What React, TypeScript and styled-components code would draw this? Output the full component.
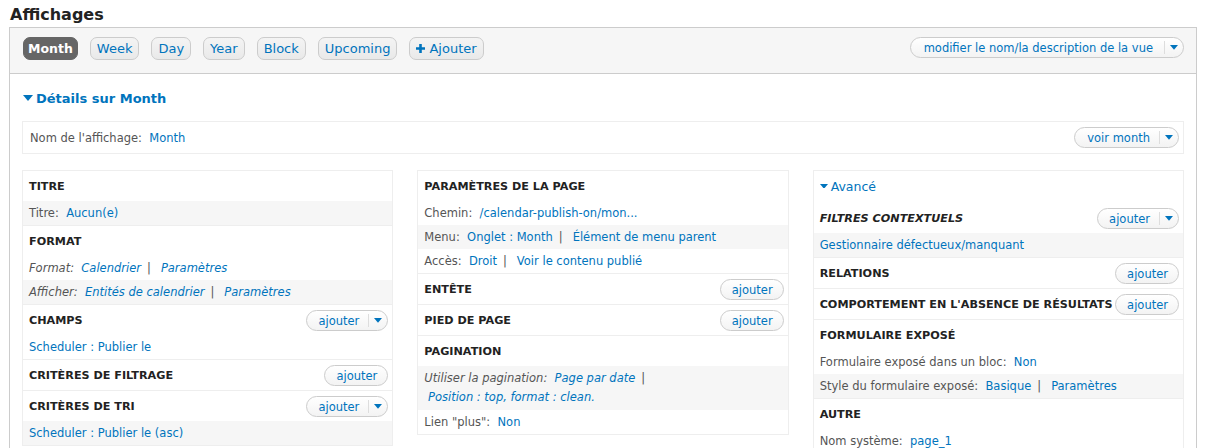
import React from "react";
import styled, { createGlobalStyle, css } from "styled-components";

const Global = createGlobalStyle`
  html, body { margin: 0; padding: 0; background: #fff; }
  body { font-family: "DejaVu Sans", "Noto Sans", sans-serif; font-size: 11.5px; color: #333; overflow: hidden; }
  * { box-sizing: border-box; }
`;

const blue = "#0074bd";

const Page = styled.div`
  padding: 6px 16px 0 9px;
`;

const Heading = styled.h2`
  margin: 0 0 3px 1px;
  font-size: 16px;
  font-weight: bold;
  color: #222;
  line-height: 18px;
`;

const Frame = styled.div`
  border: 1px solid #ccc;
  border-bottom: none;
  min-height: 440px;
`;

const TopBar = styled.div`
  height: 46px;
  background: #f6f6f6;
  border-bottom: 1px solid #ccc;
  display: flex;
  align-items: flex-start;
  justify-content: space-between;
  padding: 9px 12px 0 13px;
`;

const Tabs = styled.div`
  display: flex;
  gap: 12px;
  align-items: center;
`;

const Tab = styled.button<{ $active?: boolean }>`
  height: 23px;
  padding: 0 6px;
  border-radius: 7px;
  border: 1px solid #ccc;
  background: linear-gradient(#f4f4f4, #e9e9e9);
  color: ${blue};
  font-family: inherit;
  font-size: 13px;
  line-height: 21px;
  display: inline-flex;
  align-items: center;
  gap: 4px;
  ${(p) =>
    p.$active &&
    css`
      padding: 0 4px;
      background: #666;
      border-color: #666;
      color: #fff;
      font-weight: bold;
      font-size: 12.5px;
    `}
`;

const Split = styled.div`
  display: inline-flex;
  align-items: stretch;
  height: 21px;
  border: 1px solid #ccc;
  border-radius: 11px;
  background: linear-gradient(#fff, #f3f3f3);
  overflow: hidden;
  flex-shrink: 0;
  font-weight: normal;
  font-style: normal;
  text-transform: none;
`;

const SplitMain = styled.span<{ $l?: number; $r?: number }>`
  display: flex;
  align-items: center;
  padding: 0 ${(p) => p.$r ?? 11}px 0 ${(p) => p.$l ?? 12}px;
  color: ${blue};
  font-size: 11.5px;
  white-space: nowrap;
`;

const SplitArrow = styled.span`
  display: flex;
  align-items: center;
  justify-content: center;
  width: 19px;
  border-left: 1px solid #ddd;
  margin: 3px 0;
`;

const Caret = ({ size = 8 }: { size?: number }) => (
  <svg width={size} height={size * 0.6} viewBox="0 0 10 6">
    <path d="M0 0 L10 0 L5 6 Z" fill={blue} />
  </svg>
);

const Body = styled.div`
  padding: 0 12px;
`;

const DetailsTitle = styled.div`
  display: flex;
  align-items: center;
  gap: 3px;
  margin: 16px 0 0 1px;
  height: 16px;
  color: ${blue};
  font-weight: bold;
  font-size: 13px;
`;

const NameBox = styled.div`
  margin-top: 15px;
  height: 33px;
  border: 1px solid #eee;
  display: flex;
  align-items: center;
  justify-content: space-between;
  padding: 0 4px 0 7px;
  color: #555;
`;

const Columns = styled.div`
  margin-top: 16px;
  display: grid;
  grid-template-columns: repeat(3, minmax(0, 1fr));
  gap: 24px;
  align-items: start;
`;

const Column = styled.div`
  border: 1px solid #eee;
`;

const Section = styled.div`
  & + & {
    border-top: 1px solid #eee;
  }
`;

const SectionHead = styled.div<{ $italic?: boolean }>`
  height: 30px;
  display: flex;
  align-items: center;
  justify-content: space-between;
  padding: 1px 4px 0 6px;
  font-weight: bold;
  text-transform: uppercase;
  color: #222;
  font-size: 11.2px;
  white-space: nowrap;
  ${(p) => p.$italic && css`font-style: italic;`}
`;

const Row = styled.div<{ $shade?: boolean; $italic?: boolean; $tall?: boolean }>`
  padding: 3px 6px;
  line-height: ${(p) => (p.$tall ? 19 : 18)}px;
  background: ${(p) => (p.$shade ? "#f6f6f6" : "transparent")};
  color: #555;
  ${(p) => p.$italic && css`font-style: italic;`}
`;

const Link = styled.a`
  color: ${blue};
  text-decoration: none;
`;

const Pipe = styled.span`
  margin: 0 10px 0 6px;
  color: #555;
`;

const Advanced = styled.div`
  height: 32px;
  display: flex;
  align-items: center;
  gap: 3px;
  padding: 0 0 2px 6px;
  color: ${blue};
  font-size: 12.5px;
`;

const Ajouter = ({ split }: { split?: boolean }) =>
  split ? (
    <Split>
      <SplitMain $l={11} $r={9}>
        ajouter
      </SplitMain>
      <SplitArrow>
        <Caret />
      </SplitArrow>
    </Split>
  ) : (
    <Split>
      <SplitMain $l={11} $r={10}>
        ajouter
      </SplitMain>
    </Split>
  );

const Plus = () => (
  <svg width="9" height="9" viewBox="0 0 9 9">
    <path d="M3.2 0h2.6v3.2H9v2.6H5.8V9H3.2V5.8H0V3.2h3.2z" fill={blue} />
  </svg>
);

export default function App() {
  return (
    <Page>
      <Global />
      <Heading>Affichages</Heading>
      <Frame>
        <TopBar>
          <Tabs>
            <Tab $active>Month</Tab>
            <Tab>Week</Tab>
            <Tab>Day</Tab>
            <Tab>Year</Tab>
            <Tab>Block</Tab>
            <Tab>Upcoming</Tab>
            <Tab>
              <Plus />
              Ajouter
            </Tab>
          </Tabs>
          <Split>
            <SplitMain $l={13} $r={11}>
              modifier le nom/la description de la vue
            </SplitMain>
            <SplitArrow>
              <Caret />
            </SplitArrow>
          </Split>
        </TopBar>
        <Body>
          <DetailsTitle>
            <Caret size={10} />
            Détails sur Month
          </DetailsTitle>
          <NameBox>
            <span>
              Nom de l'affichage:&nbsp; <Link>Month</Link>
            </span>
            <Split>
              <SplitMain $l={12} $r={9}>
                voir month
              </SplitMain>
              <SplitArrow>
                <Caret />
              </SplitArrow>
            </Split>
          </NameBox>
          <Columns>
            <Column>
              <Section>
                <SectionHead>Titre</SectionHead>
                <Row $shade>
                  Titre:&nbsp; <Link>Aucun(e)</Link>
                </Row>
              </Section>
              <Section>
                <SectionHead>Format</SectionHead>
                <Row $italic>
                  Format:&nbsp; <Link>Calendrier</Link>
                  <Pipe>|</Pipe>
                  <Link>Paramètres</Link>
                </Row>
                <Row $italic $shade>
                  Afficher:&nbsp; <Link>Entités de calendrier</Link>
                  <Pipe>|</Pipe>
                  <Link>Paramètres</Link>
                </Row>
              </Section>
              <Section>
                <SectionHead>
                  Champs <Ajouter split />
                </SectionHead>
                <Row>
                  <Link>Scheduler : Publier le</Link>
                </Row>
              </Section>
              <Section>
                <SectionHead>
                  Critères de filtrage <Ajouter />
                </SectionHead>
              </Section>
              <Section>
                <SectionHead>
                  Critères de tri <Ajouter split />
                </SectionHead>
                <Row $shade>
                  <Link>Scheduler : Publier le (asc)</Link>
                </Row>
              </Section>
            </Column>

            <Column>
              <Section>
                <SectionHead>Paramètres de la page</SectionHead>
                <Row>
                  Chemin:&nbsp; <Link>/calendar-publish-on/mon...</Link>
                </Row>
                <Row $shade>
                  Menu:&nbsp; <Link>Onglet : Month</Link>
                  <Pipe>|</Pipe>
                  <Link>Élément de menu parent</Link>
                </Row>
                <Row>
                  Accès:&nbsp; <Link>Droit</Link>
                  <Pipe>|</Pipe>
                  <Link>Voir le contenu publié</Link>
                </Row>
              </Section>
              <Section>
                <SectionHead>
                  Entête <Ajouter />
                </SectionHead>
              </Section>
              <Section>
                <SectionHead>
                  Pied de page <Ajouter />
                </SectionHead>
              </Section>
              <Section>
                <SectionHead>Pagination</SectionHead>
                <Row $italic $shade $tall>
                  Utiliser la pagination:&nbsp; <Link>Page par date</Link>
                  <Pipe>|</Pipe>
                  <br />
                  &nbsp;<Link>Position : top, format : clean.</Link>
                </Row>
                <Row>
                  Lien "plus":&nbsp; <Link>Non</Link>
                </Row>
              </Section>
            </Column>

            <Column>
              <Advanced>
                <Caret />
                Avancé
              </Advanced>
              <Section>
                <SectionHead $italic>
                  Filtres contextuels <Ajouter split />
                </SectionHead>
                <Row $shade>
                  <Link>Gestionnaire défectueux/manquant</Link>
                </Row>
              </Section>
              <Section>
                <SectionHead>
                  Relations <Ajouter />
                </SectionHead>
              </Section>
              <Section>
                <SectionHead>
                  Comportement en l'absence de résultats <Ajouter />
                </SectionHead>
              </Section>
              <Section>
                <SectionHead>Formulaire exposé</SectionHead>
                <Row>
                  Formulaire exposé dans un bloc:&nbsp; <Link>Non</Link>
                </Row>
                <Row $shade>
                  Style du formulaire exposé:&nbsp; <Link>Basique</Link>
                  <Pipe>|</Pipe>
                  <Link>Paramètres</Link>
                </Row>
              </Section>
              <Section>
                <SectionHead>Autre</SectionHead>
                <Row>
                  Nom système:&nbsp; <Link>page_1</Link>
                </Row>
              </Section>
            </Column>
          </Columns>
        </Body>
      </Frame>
    </Page>
  );
}
